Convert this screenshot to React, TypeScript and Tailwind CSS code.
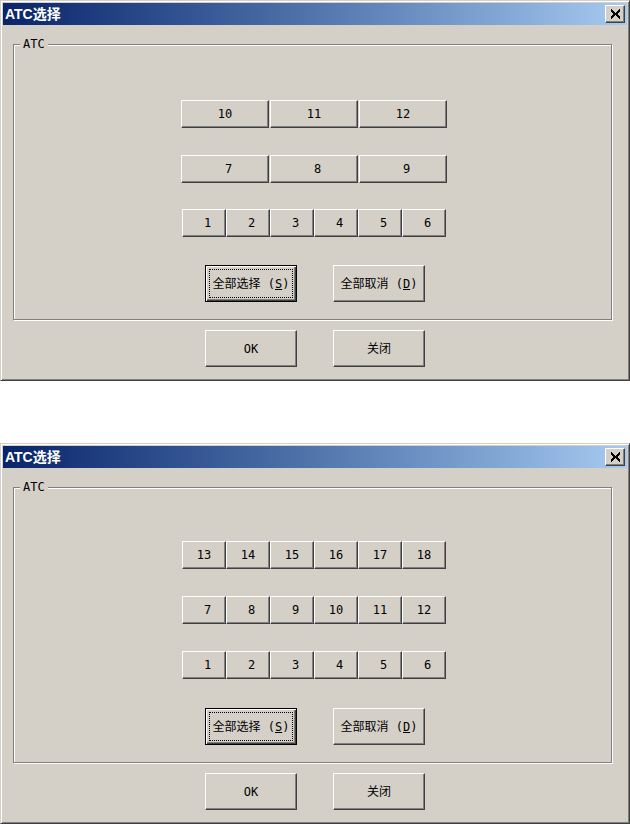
import type { ReactNode } from 'react';

// Classic Windows bevels
const BTN =
  "flex items-center justify-center bg-[#d4d0c8] text-black text-[12px] leading-none font-['DejaVu_Sans_Mono','Noto_Sans_CJK_SC',monospace] border border-t-white border-l-white border-r-[#404040] border-b-[#404040] shadow-[inset_-1px_-1px_0_#808080]";

const DEFAULT_BTN =
  "flex items-center justify-center bg-[#d4d0c8] text-black text-[12px] leading-none font-['DejaVu_Sans_Mono','Noto_Sans_CJK_SC',monospace] border border-black shadow-[inset_1px_1px_0_#fff,inset_-1px_-1px_0_#404040,inset_-2px_-2px_0_#808080] outline-1 outline-dotted outline-black outline-offset-[-5px]";

function WinButton({
  children,
  size,
  isDefault = false,
}: {
  children: ReactNode;
  size: string;
  isDefault?: boolean;
}) {
  return (
    <button type="button" className={`${isDefault ? DEFAULT_BTN : BTN} ${size}`}>
      {children}
    </button>
  );
}

function TitleBar() {
  return (
    <div className="flex h-[22px] items-center justify-between bg-linear-to-r from-[#0a246a] to-[#a6caf0] pl-[2px] pr-[2px]">
      <span className="text-[14px] font-bold leading-none text-white font-['Liberation_Sans','Noto_Sans_CJK_SC',sans-serif]">
        ATC选择
      </span>
      <button
        type="button"
        className="flex h-[18px] w-[20px] items-center justify-center bg-[#d4d0c8] border border-t-white border-l-white border-r-[#404040] border-b-[#404040] shadow-[inset_-1px_-1px_0_#808080]"
      >
        <svg width="11" height="10" viewBox="0 0 11 10" shapeRendering="crispEdges">
          <path d="M1 1 L10 9 M10 1 L1 9" stroke="#000" strokeWidth="2" fill="none" />
        </svg>
      </button>
    </div>
  );
}

type Row = { nums: number[]; big: boolean; gap: string };

// single digits carry a leading blank, as in the original labels
const label = (n: number) => String(n).padStart(2, '\u00a0');

function NumberRow({ row }: { row: Row }) {
  if (row.big) {
    return (
      <div className={`flex gap-[1px] ml-[167px] ${row.gap}`}>
        {row.nums.map((n) => (
          <WinButton key={n} size="w-[88px] h-[28px]">
            {label(n)}
          </WinButton>
        ))}
      </div>
    );
  }
  return (
    <div className={`flex ml-[168px] ${row.gap}`}>
      {row.nums.map((n) => (
        <WinButton key={n} size="w-[44px] h-[28px]">
          {label(n)}
        </WinButton>
      ))}
    </div>
  );
}

function AtcDialog({ rows, top, actionGap }: { rows: Row[]; top: string; actionGap: string }) {
  return (
    <div className="flex h-[381px] w-[630px] flex-col bg-[#d4d0c8] p-[2px] border border-t-[#d4d0c8] border-l-[#d4d0c8] border-r-[#404040] border-b-[#404040] shadow-[inset_1px_1px_0_#fff,inset_-1px_-1px_0_#808080]">
      <TitleBar />

      {/* ATC group */}
      <div
        className={`relative mt-[19px] ml-[10px] flex h-[276px] w-[599px] flex-col border border-[#808080] shadow-[inset_1px_1px_0_#fff,1px_1px_0_#fff] ${top}`}
      >
        <span className="absolute -top-[7px] left-[6px] bg-[#d4d0c8] px-[3px] text-[12px] leading-[12px] text-black font-['DejaVu_Sans_Mono',monospace]">
          ATC
        </span>

        {rows.map((row, i) => (
          <NumberRow key={i} row={row} />
        ))}

        <div className={`ml-[191px] flex gap-[36px] ${actionGap}`}>
          <WinButton size="w-[92px] h-[37px]" isDefault>
            全部选择 (<span className="underline">S</span>)
          </WinButton>
          <WinButton size="w-[92px] h-[37px]">
            全部取消 (<span className="underline">D</span>)
          </WinButton>
        </div>
      </div>

      <div className="mt-[10px] ml-[202px] flex gap-[36px]">
        <WinButton size="w-[92px] h-[37px]">OK</WinButton>
        <WinButton size="w-[92px] h-[37px]">关闭</WinButton>
      </div>
    </div>
  );
}

export default function App() {
  const firstRows: Row[] = [
    { nums: [10, 11, 12], big: true, gap: '' },
    { nums: [7, 8, 9], big: true, gap: 'mt-[27px]' },
    { nums: [1, 2, 3, 4, 5, 6], big: false, gap: 'mt-[26px]' },
  ];
  const secondRows: Row[] = [
    { nums: [13, 14, 15, 16, 17, 18], big: false, gap: '' },
    { nums: [7, 8, 9, 10, 11, 12], big: false, gap: 'mt-[27px]' },
    { nums: [1, 2, 3, 4, 5, 6], big: false, gap: 'mt-[27px]' },
  ];

  return (
    <div className="flex min-h-[824px] w-[630px] flex-col bg-white">
      <AtcDialog rows={firstRows} top="pt-[55px]" actionGap="mt-[28px]" />
      <div className="mt-[62px]">
        <AtcDialog rows={secondRows} top="pt-[53px]" actionGap="mt-[29px]" />
      </div>
    </div>
  );
}
